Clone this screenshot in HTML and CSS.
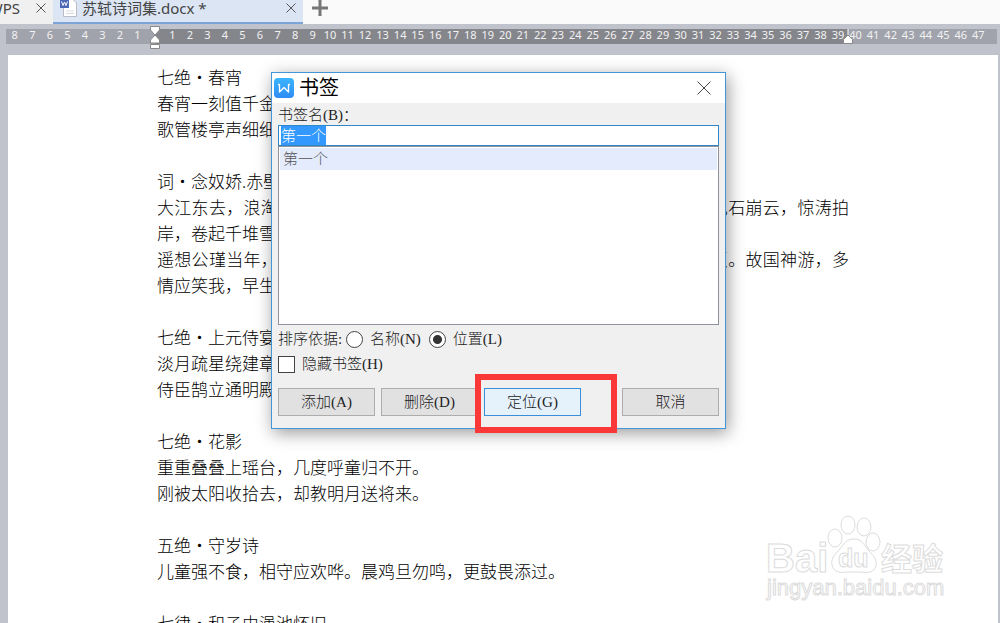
FILE: index.html
```html
<!DOCTYPE html>
<html lang="zh-CN">
<head>
  <meta charset="UTF-8">
  <meta name="viewport" content="width=device-width, initial-scale=1.0">
  <title>苏轼诗词集.docx</title>
  <link rel="stylesheet" href="styles.css">
</head>
<body>
  <header>
    <nav class="tabs">
      <div class="tab tab-home">
        <span>WPS</span>
        <button class="tab-close" aria-label="关闭"><svg width="10" height="10" viewBox="0 0 10 10"><path d="M.5 .5l9 9M9.500 .5l-9 9"/></svg></button>
      </div>
      <div class="tab tab-active">
        <svg class="doc-icon" width="18" height="20" viewBox="0 0 18 20">
          <path d="M3.500 1h9l4 4v13.500h-13z" fill="#fff" stroke="#b9bcc4"/>
          <path d="M6 13h8M6 15.500h8" stroke="#d5d7dc"/>
          <rect width="9" height="9" y="1" fill="#4a68b5"/>
          <path d="M1.500 3.500l1.500 4 1.500-3.500 1.500 3.500 1.500-4" fill="none" stroke="#fff"/>
        </svg>
        <span>苏轼诗词集.docx *</span>
        <button class="tab-close" aria-label="关闭"><svg width="10" height="10" viewBox="0 0 10 10"><path d="M.5 .5l9 9M9.500 .5l-9 9"/></svg></button>
      </div>
      <button class="tab-add" aria-label="新建"><svg width="16" height="16" viewBox="0 0 16 16"><path d="M8 0v16M0 8h16"/></svg></button>
    </nav>
    <div class="ruler-area">
      <div class="ruler" id="ruler">
        <svg class="marker marker-left" width="10" height="23" viewBox="0 0 10 23">
          <path d="M.5 .5h9v3.500L5 9 .5 4z"/>
          <path d="M5 9l4.500 5v3h-9v-3z"/>
          <path d="M.5 18.500h9v4h-9z"/>
        </svg>
        <svg class="marker marker-right" width="10" height="15" viewBox="0 0 10 15">
          <path d="M5 0v6" class="line"/>
          <path d="M5 6l4.500 4.500v4h-9v-4z"/>
        </svg>
      </div>
    </div>
  </header>

  <main>
    <article class="page">
      <p>七绝・春宵</p>
      <p>春宵一刻值千金，花有清香月有阴。</p>
      <p>歌管楼亭声细细，秋千院落夜沉沉。</p>
      <br>
      <p>词・念奴娇.赤壁怀古</p>
      <p>大江东去，浪淘尽，千古风流人物。故垒西边，人道是：三国周郎赤壁。乱石崩云，惊涛拍岸，卷起千堆雪。江山如画，一时多少豪杰。</p>
      <p>遥想公瑾当年，小乔初嫁了，雄姿英发。羽扇纶巾，谈笑间，樯橹灰飞烟灭。故国神游，多情应笑我，早生华发。人间如梦，一樽还酹江月。</p>
      <br>
      <p>七绝・上元侍宴</p>
      <p>淡月疏星绕建章，仙风吹下御炉香。</p>
      <p>侍臣鹄立通明殿，一朵红云捧玉皇。</p>
      <br>
      <p>七绝・花影</p>
      <p>重重叠叠上瑶台，几度呼童归不开。</p>
      <p>刚被太阳收拾去，却教明月送将来。</p>
      <br>
      <p>五绝・守岁诗</p>
      <p>儿童强不食，相守应欢哗。晨鸡旦勿鸣，更鼓畏添过。</p>
      <br>
      <p>七律・和子由渑池怀旧</p>
    </article>
  </main>

  <form class="dialog" role="dialog" aria-labelledby="dialogTitle" onsubmit="return false">
    <div class="dialog-title">
      <svg width="20" height="20" viewBox="0 0 20 20">
        <defs><linearGradient id="logo" x2="0" y2="1"><stop stop-color="#3bb4ff"/><stop offset="1" stop-color="#2f8cf5"/></linearGradient></defs>
        <rect width="20" height="20" rx="4" fill="url(#logo)"/>
        <path d="M4 6.500h1.500v7.500L10 9.500l4.500 4.500V6.500h1.500" fill="none" stroke="#fff" stroke-width="1.300" stroke-linejoin="round"/>
      </svg>
      <h1 id="dialogTitle">书签</h1>
      <button type="button" class="dialog-close" aria-label="关闭"><svg width="14" height="14" viewBox="0 0 14 14"><path d="M.5 .5l13 13M13.500 .5l-13 13"/></svg></button>
    </div>
    <div class="dialog-body">
      <label class="name-label" for="bookmarkName">书签名(B)：</label>
      <input class="name-input" type="text" id="bookmarkName" value="第一个" autocomplete="off" spellcheck="false">
      <ul class="bookmarks">
        <li>第一个</li>
      </ul>
      <div class="options">
        <span>排序依据:</span>
        <input type="radio" name="sort" id="sortName"><label for="sortName">名称(N)</label>
        <input type="radio" name="sort" id="sortPlace" checked><label for="sortPlace">位置(L)</label>
      </div>
      <div class="options">
        <input type="checkbox" id="hideMarks"><label for="hideMarks">隐藏书签(H)</label>
      </div>
      <div class="actions">
        <button type="button">添加(A)</button>
        <button type="button">删除(D)</button>
        <button type="button" class="primary">定位(G)</button>
        <button type="button" class="cancel">取消</button>
      </div>
    </div>
    <div class="highlight"></div>
  </form>

  <svg class="watermark" width="190" height="95" viewBox="0 0 190 95">
    <text class="latin" x="6" y="62" font-size="40">Bai</text>
    <g>
      <ellipse cx="75" cy="28" rx="7" ry="9"/>
      <ellipse cx="88" cy="15" rx="7" ry="9"/>
      <ellipse cx="104" cy="17" rx="7" ry="9"/>
      <ellipse cx="113" cy="32" rx="7" ry="9"/>
      <path d="M94 29c-9 0-11 7-16 12s-7 9-6 14c2 8 9 8 15 7h14c6 1 13 1 15-6 1-6-2-10-7-15-5-6-7-12-15-12z"/>
    </g>
    <text class="latin" x="78" y="57" font-size="25">du</text>
    <text class="hanzi" x="121" y="60" font-size="31">经验</text>
    <text class="url" x="7" y="85" font-size="22">jingyan.baidu.com</text>
  </svg>

  <script>
    const ruler = document.getElementById("ruler");
    for (let n = -8; n <= 47; n++) {
      const mark = document.createElement("span");
      mark.textContent = n === 0 ? "" : Math.abs(n);
      ruler.appendChild(mark);
    }

    const nameInput = document.getElementById("bookmarkName");
    nameInput.focus();
    nameInput.select();
  </script>
</body>
</html>
```
FILE: styles.css
```css
* {
  box-sizing: border-box;
}

body {
  font-family: "Noto Sans", "Noto Sans CJK SC", sans-serif;
  background-color: #c0c3cc;
  color: #222;
  margin: 0;
  height: 100vh;
  display: flex;
  flex-direction: column;
  overflow: hidden;
  position: relative;
}

button {
  font-family: inherit;
  padding: 0;
  border: none;
  background: none;
}

svg {
  display: block;
}

/* tabs */
.tabs {
  display: flex;
  height: 24px;
  background-color: #fafafa;
}

.tab {
  display: flex;
  align-items: center;
  padding-bottom: 8px;
  font-size: 15px;
  line-height: 16px;
  color: #444;
  white-space: nowrap;
  overflow: hidden;
}

.tab-home {
  width: 53px;
  justify-content: flex-end;
  gap: 16px;
  padding-right: 7px;
  background-color: #f0f0f0;
}

.tab-active {
  width: 250px;
  gap: 4px;
  padding-left: 7px;
  padding-right: 7px;
  padding-bottom: 6px;
  background-color: #dbe5f3;
  border-bottom: 2px solid #7da4d8;
}

.tab-active .tab-close {
  margin-left: auto;
}

.doc-icon {
  flex: none;
}

.tab-close svg {
  stroke: #555;
}

.tab-add {
  padding: 0 9px 8px;
}

.tab-add svg {
  stroke: #777;
  stroke-width: 3;
}

/* ruler */
.ruler-area {
  padding: 5px 3px 11px 6px;
}

.ruler {
  position: relative;
  display: grid;
  grid-template-columns: repeat(56, 1fr);
  height: 15px;
  padding-right: 10px;
  background: linear-gradient(to right, #a1a3ac 15%, #85868c 15%, #85868c 85%, #a1a3ac 85%);
  color: #f2f2f2;
  font-size: 11px;
  line-height: 12px;
  text-align: center;
}

.marker {
  position: absolute;
  fill: #fff;
  stroke: #888;
  stroke-width: 1;
  transform: translateX(-50%);
}

.marker-left {
  left: 15%;
  top: -3px;
}

.marker-right {
  left: 85%;
  top: 0;
}

.marker .line {
  stroke: #fff;
}

/* document */
main {
  flex: 1;
  min-height: 0;
  padding: 0 2px 0 8px;
}

.page {
  min-height: 100%;
  padding: 9px 149px;
  background-color: #fff;
  color: #000;
  font-family: "Noto Sans CJK SC", sans-serif;
  font-size: 17px;
  font-weight: 300;
  line-height: 26px;
  text-align: justify;
  text-spacing-trim: space-all;
}

.page p {
  margin: 0;
}

/* bookmark dialog */
.dialog {
  position: absolute;
  left: 271px;
  top: 72px;
  width: 455px;
  border: 1px solid #4496d6;
  background-color: #f0f0f0;
  box-shadow: 2px 4px 16px rgba(0, 0, 0, 0.4);
  font-family: "Liberation Serif", "Noto Sans CJK SC", serif;
  font-size: 15px;
  font-weight: 300;
  line-height: 20px;
  text-spacing-trim: space-all;
}

.dialog-title {
  display: flex;
  align-items: center;
  gap: 5px;
  height: 30px;
  padding: 0 14px 1px 2px;
  background-color: #fff;
}

.dialog-title h1 {
  margin: 0;
  font-size: 20px;
  font-weight: 400;
  color: #000;
}

.dialog-close {
  margin-left: auto;
}

.dialog-close svg {
  stroke: #444;
}

.dialog-body {
  padding: 2px 6px 12px;
}

.name-label {
  display: block;
}

.name-input {
  display: block;
  width: 100%;
  height: 21px;
  padding: 0 2px 2px;
  border: 1px solid #2f86c8;
  background-color: #fff;
  font: inherit;
  line-height: 16px;
  outline: none;
}

.name-input::selection {
  background-color: #3399ff;
  color: #fff;
}

.bookmarks {
  list-style: none;
  margin: 0 0 2px;
  padding: 1px;
  height: 179px;
  border: 1px solid #8e929c;
  background-color: #fff;
}

.bookmarks li {
  padding: 0 3px;
  line-height: 22px;
  background-color: #e3ebfd;
  color: #555;
}

.options {
  display: flex;
  align-items: center;
  height: 25px;
}

.options input {
  appearance: none;
  width: 17px;
  height: 17px;
  margin: 0 7px 0 0;
  border: 1px solid #444;
  background-color: #fff;
}

.options input[type="radio"] {
  border-radius: 50%;
}

.options input[type="radio"]:checked {
  background-image: radial-gradient(circle, #333 4px, #fff 5px);
}

.options span {
  width: 68px;
}

.options span,
.options label {
  padding-bottom: 2px;
}

.options label + input {
  margin-left: 8px;
}

.actions {
  display: flex;
  gap: 6px;
  margin-top: 11px;
}

.actions button {
  width: 97px;
  height: 28px;
  padding-bottom: 3px;
  border: 1px solid #adadad;
  background-color: #e1e1e1;
  font-size: 15px;
  font-weight: 300;
  color: #222;
}

.actions .primary {
  border-color: #3a8fdb;
  background-color: #e5f1fb;
}

.actions .cancel {
  margin-left: auto;
}

.highlight {
  position: absolute;
  left: 203px;
  top: 301px;
  width: 142px;
  height: 59px;
  border: 6px solid #fb3838;
  pointer-events: none;
}

/* watermark */
.watermark {
  position: absolute;
  right: 50px;
  bottom: 18px;
  fill: #fff;
  stroke: #dcdcdc;
  stroke-width: 1;
}

.watermark .latin {
  font-family: "Liberation Sans", sans-serif;
  font-weight: bold;
}

.watermark .hanzi {
  font-family: "Noto Sans CJK SC", sans-serif;
  font-weight: bold;
}

.watermark .url {
  font-family: "Liberation Sans", sans-serif;
}
```
